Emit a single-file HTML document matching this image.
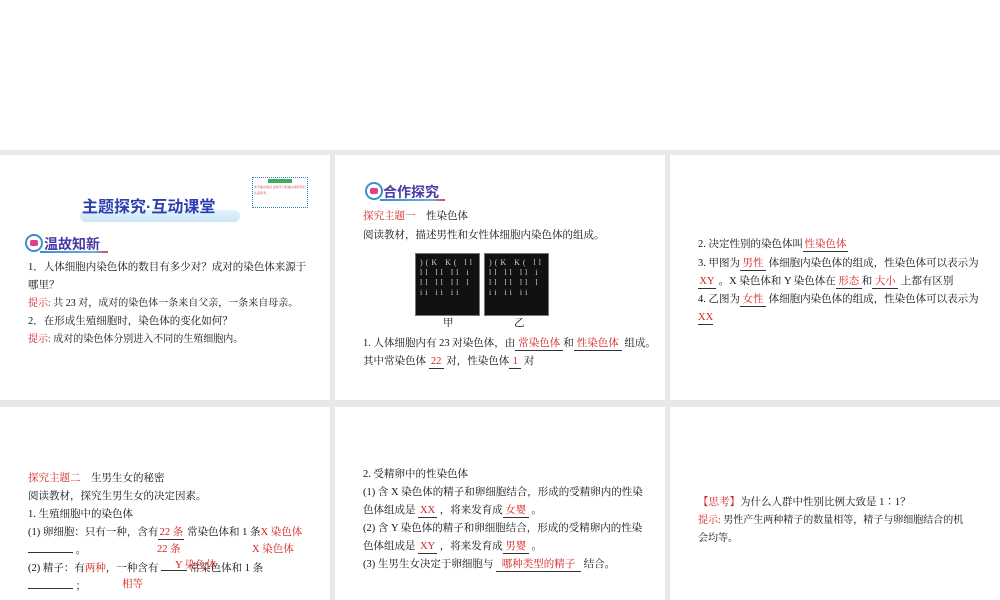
<!DOCTYPE html>
<html><head><meta charset="utf-8"><style>
html,body{margin:0;padding:0;width:1000px;height:600px;overflow:hidden;background:#fff;position:relative;font-family:"Liberation Serif","Noto Serif CJK SC",serif;color:#111;}
.g{position:absolute;background:#e8e8e8}
.s{position:absolute;background:#fff;overflow:hidden}
.t{position:absolute;white-space:nowrap;font-size:10.5px;line-height:14px}
.r{color:#d42020}
.u{display:inline-block;border-bottom:1px solid #333;text-align:center;color:#d42020;line-height:12px}
.h{position:absolute;font-family:"Liberation Sans","Noto Sans CJK SC",sans-serif;font-weight:bold;color:#4a3aa8;font-size:14px}
.ic{position:absolute;width:14px;height:14px;border:2px solid #3a8fd0;border-radius:50%;background:#fff}
.ic:after{content:"";position:absolute;left:3px;top:4px;width:8px;height:6px;background:#e0408a;border-radius:2px}
.ul{position:absolute;height:2px;background:linear-gradient(90deg,#3a8fd0,#6ab0e0 80%,#e04060)}
</style></head><body>
<div class="g" style="left:0;top:150px;width:1000px;height:450px"></div>
<div class="s" style="left:0;top:155px;width:330px;height:245px"></div>
<div class="s" style="left:335px;top:155px;width:330px;height:245px"></div>
<div class="s" style="left:670px;top:155px;width:330px;height:245px"></div>
<div class="s" style="left:0;top:407px;width:330px;height:193px"></div>
<div class="s" style="left:335px;top:407px;width:330px;height:193px"></div>
<div class="s" style="left:670px;top:407px;width:330px;height:193px"></div>

<!-- slide 1 -->
<div style="position:absolute;left:80px;top:210px;width:160px;height:12px;background:linear-gradient(180deg,#dbeefa,#bfe0f5);border-radius:6px;opacity:.8"></div>
<div class="h" style="left:82px;top:193px;font-size:16px;color:#2b3fb0">主题探究·互动课堂</div>
<div style="position:absolute;left:252px;top:177px;width:56px;height:31px;border:1px dotted #3a7ad0;font-size:3px;color:#c03030;line-height:6px;padding:1px;box-sizing:border-box"><div style="background:#3cae5a;width:24px;height:4px;margin:0 auto 1px"></div>本节重点难点 这是学习的重点请同学们认真思考。</div>
<div class="ic" style="left:25px;top:234px"></div>
<div class="h" style="left:44px;top:234px">温故知新</div>
<div class="ul" style="left:40px;top:251px;width:68px"></div>
<div class="t" style="left:28px;top:261px">1．人体细胞内染色体的数目有多少对？成对的染色体来源于</div>
<div class="t" style="left:28px;top:279px">哪里？</div>
<div class="t" style="left:28px;top:297px;font-size:10px"><span class="r">提示:</span> 共 23 对，成对的染色体一条来自父亲，一条来自母亲。</div>
<div class="t" style="left:28px;top:315px">2．在形成生殖细胞时，染色体的变化如何？</div>
<div class="t" style="left:28px;top:333px;font-size:10px"><span class="r">提示:</span> 成对的染色体分别进入不同的生殖细胞内。</div>

<!-- slide 2 -->
<div class="ic" style="left:365px;top:182px"></div>
<div class="h" style="left:383px;top:182px">合作探究</div>
<div class="ul" style="left:380px;top:199px;width:65px"></div>
<div class="t" style="left:363px;top:210px"><span class="r">探究主题一</span>　性染色体</div>
<div class="t" style="left:363px;top:229px">阅读教材，描述男性和女性体细胞内染色体的组成。</div>
<div style="position:absolute;left:415px;top:253px;width:63px;height:61px;background:#111;border:1px solid #777"></div>
<div style="position:absolute;left:484px;top:253px;width:63px;height:61px;background:#111;border:1px solid #777"></div>
<div style="position:absolute;left:420px;top:258px;width:55px;height:50px;color:#ccc;font-size:8px;line-height:10px;letter-spacing:3px">)(K K( ll<br>ll ll ll i<br>ll ll ll l<br>ii ii ii</div>
<div style="position:absolute;left:489px;top:258px;width:55px;height:50px;color:#ccc;font-size:8px;line-height:10px;letter-spacing:3px">)(K K( ll<br>ll ll ll i<br>ll ll ll l<br>ii ii ii</div>
<div class="t" style="left:443px;top:317px">甲</div>
<div class="t" style="left:514px;top:317px">乙</div>
<div class="t" style="left:363px;top:337px">1. 人体细胞内有 23 对染色体，由<span class="u" style="width:48px">常染色体</span>和<span class="u" style="width:48px">性染色体</span> 组成。</div>
<div class="t" style="left:363px;top:355px">其中常染色体 <span class="u" style="width:15px">22</span> 对，性染色体<span class="u" style="width:12px">1</span> 对</div>

<!-- slide 3 -->
<div class="t" style="left:698px;top:238px">2. 决定性别的染色体叫<span class="u" style="width:45px">性染色体</span></div>
<div class="t" style="left:698px;top:257px">3. 甲图为<span class="u" style="width:26px">男性</span> 体细胞内染色体的组成，性染色体可以表示为</div>
<div class="t" style="left:698px;top:275px"><span class="u" style="width:18px">XY</span> 。X 染色体和 Y 染色体在<span class="u" style="width:26px">形态</span>和<span class="u" style="width:26px">大小</span> 上都有区别</div>
<div class="t" style="left:698px;top:293px">4. 乙图为<span class="u" style="width:26px">女性</span> 体细胞内染色体的组成，性染色体可以表示为</div>
<div class="t" style="left:698px;top:311px"><span class="u" style="width:15px">XX</span></div>

<!-- slide 4 -->
<div class="t" style="left:28px;top:472px"><span class="r">探究主题二</span>　生男生女的秘密</div>
<div class="t" style="left:28px;top:490px">阅读教材，探究生男生女的决定因素。</div>
<div class="t" style="left:28px;top:508px">1. 生殖细胞中的染色体</div>
<div class="t" style="left:28px;top:526px">(1) 卵细胞：只有一种，含有<span class="u" style="width:26px">22 条</span> 常染色体和 1 条<span class="r">X 染色体</span></div>
<div class="t" style="left:28px;top:544px"><span class="u" style="width:45px"></span> 。</div>
<div class="t r" style="left:157px;top:543px">22 条</div>
<div class="t r" style="left:252px;top:543px">X 染色体</div>
<div class="t" style="left:28px;top:562px">(2) 精子：有<span class="r">两种</span>，一种含有 <span class="u" style="width:26px"></span> 常染色体和 1 条</div>
<div class="t r" style="left:175px;top:559px">Y 染色体</div>
<div class="t" style="left:28px;top:580px"><span class="u" style="width:45px"></span> ；</div>
<div class="t r" style="left:122px;top:578px">相等</div>

<!-- slide 5 -->
<div class="t" style="left:363px;top:468px">2. 受精卵中的性染色体</div>
<div class="t" style="left:363px;top:486px">(1) 含 X 染色体的精子和卵细胞结合，形成的受精卵内的性染</div>
<div class="t" style="left:363px;top:504px">色体组成是 <span class="u" style="width:19px">XX</span> ，将来发育成<span class="u" style="width:26px">女婴</span> 。</div>
<div class="t" style="left:363px;top:522px">(2) 含 Y 染色体的精子和卵细胞结合，形成的受精卵内的性染</div>
<div class="t" style="left:363px;top:540px">色体组成是 <span class="u" style="width:19px">XY</span> ，将来发育成<span class="u" style="width:26px">男婴</span> 。</div>
<div class="t" style="left:363px;top:558px">(3) 生男生女决定于卵细胞与 <span class="u" style="width:85px">哪种类型的精子</span> 结合。</div>

<!-- slide 6 -->
<div class="t" style="left:698px;top:496px"><span class="r">【思考】</span>为什么人群中性别比例大致是 1∶1？</div>
<div class="t" style="left:698px;top:514px;font-size:10px"><span class="r">提示:</span> 男性产生两种精子的数量相等，精子与卵细胞结合的机</div>
<div class="t" style="left:698px;top:532px;font-size:10px">会均等。</div>
</body></html>
